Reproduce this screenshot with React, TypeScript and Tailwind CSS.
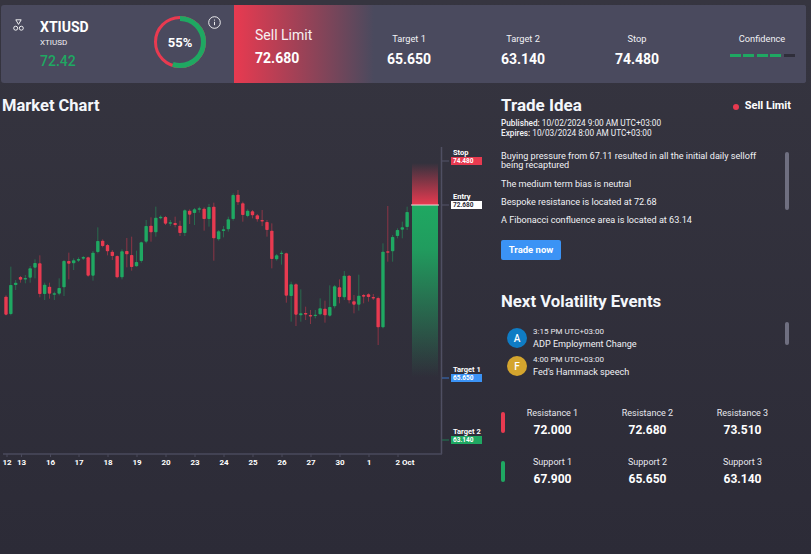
import React from 'react';

// [body top, body bottom, wick top, wick bottom] in 3x zoom units of the two chart crops
type Candle = [number, number, number, number, 'r' | 'g'];

const firstCandles: Candle[] = [
  [440, 494, 436, 496, 'r'], [405, 492, 350, 496, 'g'], [398, 405, 390, 420, 'g'], [381, 389, 378, 398, 'r'],
  [384, 388, 375, 400, 'g'], [355, 383, 348, 398, 'g'], [339, 353, 328, 385, 'g'], [340, 432, 316, 442, 'r'],
  [404, 432, 398, 450, 'g'], [410, 431, 398, 446, 'r'], [430, 434, 425, 450, 'g'], [414, 431, 385, 436, 'g'],
  [333, 412, 330, 438, 'g'], [333, 341, 308, 388, 'r'], [331, 340, 325, 360, 'g'], [327, 332, 322, 336, 'g'],
  [321, 326, 318, 330, 'g'], [322, 377, 320, 380, 'r'], [308, 377, 303, 392, 'g'], [273, 306, 232, 310, 'g'],
  [272, 288, 268, 292, 'r'], [285, 304, 282, 316, 'r'], [305, 318, 300, 330, 'r'], [318, 382, 316, 385, 'r'],
  [304, 382, 298, 388, 'g'], [303, 313, 264, 352, 'r'], [315, 351, 260, 362, 'r'], [336, 349, 302, 350, 'g'],
  [277, 333, 275, 338, 'g'], [228, 275, 210, 280, 'g'], [227, 247, 202, 275, 'r'], [203, 247, 170, 260, 'g'],
  [200, 205, 196, 208, 'g'], [201, 221, 198, 225, 'r'], [217, 221, 210, 228, 'g'], [219, 225, 200, 232, 'r'],
  [227, 249, 212, 258, 'r'], [181, 249, 178, 258, 'g'], [182, 194, 178, 222, 'r'], [178, 189, 174, 225, 'g'],
  [175, 179, 170, 188, 'g'], [176, 207, 172, 242, 'r'], [171, 207, 162, 230, 'g'], [170, 265, 158, 332, 'r'],
  [244, 268, 240, 272, 'g'], [238, 243, 228, 262, 'g'], [208, 238, 200, 245, 'g'], [135, 207, 130, 212, 'g'],
  [134, 157, 120, 165, 'r'], [160, 195, 155, 215, 'r'],
];

const secondCandles: Candle[] = [
  [212, 228, 208, 232, 'g'], [214, 226, 210, 235, 'r'], [226, 238, 222, 245, 'r'], [240, 244, 210, 258, 'r'],
  [246, 270, 240, 290, 'r'], [272, 357, 250, 385, 'r'], [346, 358, 342, 362, 'g'], [338, 342, 332, 374, 'g'],
  [340, 467, 338, 488, 'r'], [433, 468, 425, 545, 'g'], [433, 524, 430, 558, 'r'], [520, 526, 448, 545, 'g'],
  [519, 523, 500, 540, 'r'], [525, 528, 510, 552, 'r'], [524, 528, 510, 535, 'g'], [505, 523, 475, 526, 'g'],
  [506, 526, 482, 548, 'r'], [501, 527, 436, 530, 'g'], [439, 499, 435, 505, 'g'], [442, 471, 418, 490, 'r'],
  [407, 472, 393, 480, 'g'], [407, 481, 405, 490, 'r'], [484, 494, 465, 520, 'r'], [467, 494, 404, 512, 'g'],
  [465, 470, 462, 490, 'r'], [463, 471, 460, 485, 'r'], [471, 474, 462, 480, 'r'], [474, 562, 470, 615, 'r'],
  [335, 562, 310, 565, 'g'], [334, 338, 198, 365, 'r'], [291, 334, 285, 365, 'g'], [270, 288, 265, 295, 'g'],
  [262, 269, 245, 295, 'g'], [216, 261, 200, 270, 'g'],
];

const candles = [
  ...firstCandles.map((c) => ({ c, base: 150 })),
  ...secondCandles.map((c) => ({ c, base: 140 })),
];

const ticks = [
  ['12', 7, 7], ['13', 21.5, 21.5], ['16', 50.5, 50.5], ['17', 79, 79], ['18', 108, 108], ['19', 137, 137],
  ['20', 166, 166], ['23', 195, 195], ['24', 224, 224], ['25', 253, 253], ['26', 282, 282], ['27', 311, 311],
  ['30', 340, 340], ['1', 369, 369], ['2 Oct', 398, 405],
] as const;

const priceTags = [
  { name: 'Stop', value: '74.480', y: 161, fill: '#e83a50', text: '#ffffff', tick: '#55556a' },
  { name: 'Entry', value: '72.680', y: 205, fill: '#ffffff', text: '#2d2c38', tick: '#55556a' },
  { name: 'Target 1', value: '65.650', y: 378, fill: '#3b93f5', text: '#ffffff', tick: '#3b73c5' },
  { name: 'Target 2', value: '63.140', y: 440, fill: '#1fa862', text: '#ffffff', tick: '#1f7a52' },
];

function MarketChart() {
  return (
    <svg className="block mt-[4px] w-[497px] h-[351px]" viewBox="0 120 497 351" fontFamily="Roboto, sans-serif">
      <defs>
        <linearGradient id="stopZone" x1="0" y1="0" x2="0" y2="1">
          <stop offset="0" stopColor="#e83a50" stopOpacity="0" />
          <stop offset="1" stopColor="#e83a50" />
        </linearGradient>
        <linearGradient id="targetZone" x1="0" y1="0" x2="0" y2="1">
          <stop offset="0" stopColor="#1fa862" />
          <stop offset="0.25" stopColor="#1fa862" stopOpacity="0.9" />
          <stop offset="1" stopColor="#1fa862" stopOpacity="0" />
        </linearGradient>
      </defs>

      {candles.map(({ c, base }, i) => {
        const x = 6 + i * 4.833;
        const color = c[4] === 'r' ? '#e83a50' : '#1fa862';
        const top = base + c[0] / 3;
        const height = Math.max((c[1] - c[0]) / 3, 1.4);
        return (
          <g key={i}>
            <line x1={x} x2={x} y1={base + c[2] / 3} y2={base + c[3] / 3} stroke={color} strokeOpacity="0.5" strokeWidth="1" />
            <rect x={x - 1.7} y={top} width="3.4" height={height} rx="0.8" fill={color} />
          </g>
        );
      })}

      <rect x="412" y="163" width="26" height="42" fill="url(#stopZone)" />
      <rect x="412" y="205" width="26" height="172" fill="url(#targetZone)" />
      <line x1="411" x2="439" y1="205" y2="205" stroke="#f3d6da" strokeWidth="1" />

      <line x1="441.5" x2="441.5" y1="147" y2="454" stroke="#4f4f62" strokeWidth="1.5" />
      <line x1="3" x2="442" y1="454" y2="454" stroke="#4a4a5c" strokeWidth="1.5" />

      {ticks.map(([label, tickX, labelX]) => (
        <g key={label}>
          <line x1={tickX} x2={tickX} y1="454" y2="457" stroke="#4a4a5c" strokeWidth="1" />
          <text x={labelX} y="465" textAnchor="middle" fontSize="8" fontWeight="700" fill="#ffffff">{label}</text>
        </g>
      ))}

      {priceTags.map((tag) => (
        <g key={tag.name}>
          <line x1="442" x2="449" y1={tag.y} y2={tag.y} stroke={tag.tick} strokeWidth="1" />
          <text x="453" y={tag.y - 6} fontSize="7.5" fontWeight="700" fill="#ffffff">{tag.name}</text>
          <rect x="451" y={tag.y - 4} width="31" height="8" fill={tag.fill} />
          <text x="453" y={tag.y + 2.4} fontSize="6.5" fontWeight="700" fill={tag.text}>{tag.value}</text>
        </g>
      ))}
    </svg>
  );
}

function ConfidenceRing() {
  return (
    <div className="relative w-[54px] h-[54px] shrink-0">
      <svg className="w-[54px] h-[54px]" viewBox="0 0 54 54">
        <circle cx="27" cy="27" r="24.5" fill="none" stroke="#e83a50" strokeWidth="3" />
        <circle
          cx="27"
          cy="27"
          r="23.5"
          fill="none"
          stroke="#1fa862"
          strokeWidth="5"
          pathLength="100"
          strokeDasharray="55 45"
          transform="rotate(-90 27 27)"
        />
      </svg>
      <div className="absolute inset-0 pt-[1px] flex items-center justify-center text-[13px] font-bold text-white">55%</div>
    </div>
  );
}

function HeaderStat({ label, value }: { label: string; value: string }) {
  return (
    <div className="w-[114px] flex flex-col items-center pt-[28px]">
      <div className="text-[9.25px] leading-[11px] text-[#f1f1f5]">{label}</div>
      <div className="mt-[6px] text-[14px] leading-[18px] font-bold text-white">{value}</div>
    </div>
  );
}

function Level({ label, value }: { label: string; value: string }) {
  return (
    <div className="w-[95px] flex flex-col items-center">
      <div className="text-[9px] leading-[12px] text-[#e8e8ee]">{label}</div>
      <div className="mt-[4px] text-[12px] leading-[14px] font-bold text-white">{value}</div>
    </div>
  );
}

function EventRow({ letter, color, time, title }: { letter: string; color: string; time: string; title: string }) {
  return (
    <div className="flex items-center h-[28px]">
      <div className={`w-[20px] h-[20px] rounded-full flex items-center justify-center text-[10px] font-medium text-white ${color}`}>
        {letter}
      </div>
      <div className="ml-[6px]">
        <div className="text-[8px] leading-[10px] text-[#e8e8ee]">{time}</div>
        <div className="mt-[1px] text-[9.1px] leading-[12px] text-[#f1f1f5]">{title}</div>
      </div>
    </div>
  );
}

export default function App() {
  return (
    <div className="w-[811px] h-[554px] overflow-hidden pt-[5px] bg-gradient-to-b from-[#363540] to-[#2c2b37] font-['Roboto',sans-serif] text-white">
      {/* Top summary card */}
      <div className="ml-[1px] w-[805px] h-[78px] flex rounded-[3px] overflow-hidden bg-[#4a4a5e]">
        <div className="w-[233px] flex items-start pl-[12px]">
          <svg className="mt-[14px] w-[11px] h-[12px]" viewBox="0 0 11 12" fill="none" stroke="#ffffff" strokeWidth="0.9">
            <path d="M2.8 0.8h5.4L5.5 5.4z" />
            <circle cx="2.7" cy="9.2" r="2" />
            <circle cx="8.3" cy="9.2" r="2" />
          </svg>
          <div className="ml-[16px] mt-[13px] w-[113px]">
            <div className="text-[14px] leading-[18px] font-bold">XTIUSD</div>
            <div className="mt-[2px] text-[8px] leading-[10px] text-[#f1f1f5]">XTIUSD</div>
            <div className="mt-[4px] text-[14px] leading-[18px] font-medium text-[#1fa862]">72.42</div>
          </div>
          <div className="mt-[10px]"><ConfidenceRing /></div>
          <svg className="ml-[1px] mt-[11px] w-[13px] h-[13px]" viewBox="0 0 13 13" fill="none" stroke="#ffffff" strokeWidth="0.9">
            <circle cx="6.5" cy="6.5" r="5.8" />
            <path d="M6.5 5.8v3.4M6.5 3.6v1" />
          </svg>
        </div>

        <div className="flex-1 flex bg-[linear-gradient(90deg,#e83a50,#4a4a5e_140px)]">
          <div className="w-[118px] pl-[21px] pt-[21px] shrink-0">
            <div className="text-[14px] leading-[18px] text-[#f7f0f2]">Sell Limit</div>
            <div className="mt-[5px] text-[14px] leading-[18px] font-bold">72.680</div>
          </div>
          <HeaderStat label="Target 1" value="65.650" />
          <HeaderStat label="Target 2" value="63.140" />
          <HeaderStat label="Stop" value="74.480" />
          <div className="flex-1 flex flex-col items-center pt-[28px] pl-[24px]">
            <div className="text-[9.25px] leading-[11px] text-[#f1f1f5]">Confidence</div>
            <div className="mt-[10px] flex gap-[2.5px]">
              <div className="w-[11px] h-[3px] bg-[#1fa862]" />
              <div className="w-[11px] h-[3px] bg-[#1fa862]" />
              <div className="w-[11px] h-[3px] bg-[#1fa862]" />
              <div className="w-[11px] h-[3px] bg-[#1fa862]" />
              <div className="w-[11px] h-[3px] bg-[#2f2e3a]" />
            </div>
          </div>
        </div>
      </div>

      <div className="flex">
        {/* Chart column */}
        <div className="w-[501px] shrink-0">
          <h2 className="pl-[2px] mt-[13px] text-[16.5px] leading-[20px] font-bold text-[#f4f7fb]">Market Chart</h2>
          <MarketChart />
        </div>

        {/* Trade idea column */}
        <div className="flex-1 pt-[12px] pr-[20px]">
          <div className="flex items-center justify-between">
            <h2 className="text-[17px] leading-[20px] font-bold text-[#f4f7fb]">Trade Idea</h2>
            <div className="flex items-center mt-[3px]">
              <span className="w-[6px] h-[6px] rounded-full bg-[#e83a50]" />
              <span className="ml-[6px] text-[11px] font-bold">Sell Limit</span>
            </div>
          </div>
          <div className="mt-[3px] text-[8.25px] leading-[10px] text-[#f1f1f5]">
            <div><span className="font-medium">Published:</span> 10/02/2024 9:00 AM UTC+03:00</div>
            <div><span className="font-medium">Expires:</span> 10/03/2024 8:00 AM UTC+03:00</div>
          </div>

          <div className="mt-[14px] flex">
            <div className="w-[284px] text-[9.1px] text-[#f1f1f5]">
              <p className="w-[265px] leading-[9px]">Buying pressure from 67.11 resulted in all the initial daily selloff being recaptured</p>
              <p className="mt-[8px] leading-[12px]">The medium term bias is neutral</p>
              <p className="mt-[6px] leading-[12px]">Bespoke resistance is located at 72.68</p>
              <p className="mt-[6px] leading-[12px]">A Fibonacci confluence area is located at 63.14</p>
            </div>
            <div className="w-[4px] h-[58px] rounded-[2px] bg-[#6f6f80]" />
          </div>

          <button className="mt-[14px] block w-[60px] h-[20px] rounded-[2px] bg-[#3b93f5] text-[9.5px] font-bold text-white">Trade now</button>

          <h2 className="mt-[31px] text-[16.75px] leading-[20px] font-bold text-[#f4f7fb]">Next Volatility Events</h2>

          <div className="mt-[11px] flex">
            <div className="w-[284px] pl-[6px] pt-[2px]">
              <EventRow letter="A" color="bg-[#0f7cc4]" time="3:15 PM UTC+03:00" title="ADP Employment Change" />
              <EventRow letter="F" color="bg-[#d4a52e]" time="4:00 PM UTC+03:00" title="Fed's Hammack speech" />
            </div>
            <div className="w-[4px] h-[23px] rounded-[2px] bg-[#6f6f80]" />
          </div>

          <div className="mt-[27px] flex items-start">
            <div className="mt-[5px] w-[4px] h-[21px] rounded-[2px] bg-[#e83a50] shrink-0" />
            <div className="flex">
              <Level label="Resistance 1" value="72.000" />
              <Level label="Resistance 2" value="72.680" />
              <Level label="Resistance 3" value="73.510" />
            </div>
          </div>
          <div className="mt-[19px] flex items-start">
            <div className="mt-[5px] w-[4px] h-[21px] rounded-[2px] bg-[#1fa862] shrink-0" />
            <div className="flex">
              <Level label="Support 1" value="67.900" />
              <Level label="Support 2" value="65.650" />
              <Level label="Support 3" value="63.140" />
            </div>
          </div>
        </div>
      </div>
    </div>
  );
}
